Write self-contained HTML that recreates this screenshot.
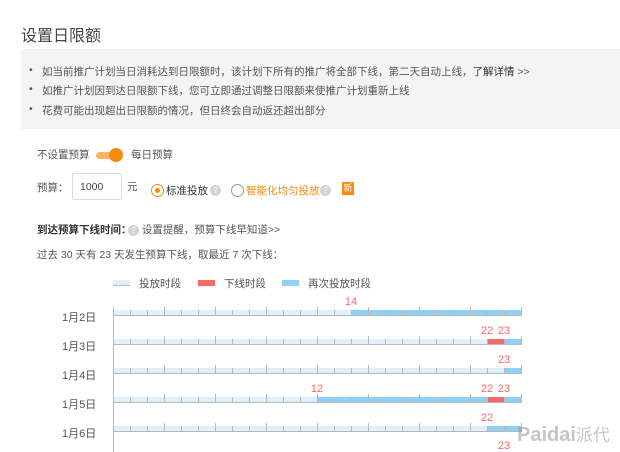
<!DOCTYPE html>
<html><head><meta charset="utf-8"><style>
*{margin:0;padding:0;box-sizing:border-box}
body{width:620px;height:452px;overflow:hidden;background:#fff;font-family:"Liberation Sans","Noto Sans CJK SC",sans-serif;color:#555;position:relative;font-size:10.5px}
.a{position:absolute;white-space:nowrap}
.box{position:absolute;left:21px;top:49px;width:599px;height:80px;background:#f4f4f4}
.q{display:inline-block;width:11px;height:11px;border-radius:50%;background:#d4d4d4;color:#fff;font-size:8px;text-align:center;line-height:11px;vertical-align:middle}
.bar{position:absolute;left:113px;width:408px;height:6px;background:#dff0fb;border-bottom:1px solid #b8b8b8}
.bar .t{position:absolute;left:0;top:0;width:100%;height:100%;background:repeating-linear-gradient(90deg,#b8b8b8 0 1px,transparent 1px 17px)}
.big{position:absolute;width:409px;height:9px;background:repeating-linear-gradient(90deg,#b8b8b8 0 1px,transparent 1px 51px)}
.seg{position:absolute;top:0;height:100%}
.b{background:#8fd0f5}.r{background:#f76a6a}
.lab{position:absolute;color:#f76a6a;font-size:11px;transform:translateX(-50%)}
.day{position:absolute;left:62px;font-size:11px;color:#555}
</style></head><body>
<div class="a" style="left:21px;top:22px;font-size:16px;color:#444">设置日限额</div>
<div class="box"></div>
<div class="a" style="left:29px;top:64px">•</div><div class="a" style="left:42px;top:64px">如当前推广计划当日消耗达到日限额时，该计划下所有的推广将全部下线，第二天自动上线，<span style="color:#333">了解详情</span> &gt;&gt;</div>
<div class="a" style="left:29px;top:83px">•</div><div class="a" style="left:42px;top:83px">如推广计划因到达日限额下线，您可立即通过调整日限额来使推广计划重新上线</div>
<div class="a" style="left:29px;top:103px">•</div><div class="a" style="left:42px;top:103px">花费可能出现超出日限额的情况，但日终会自动返还超出部分</div>

<div class="a" style="left:37px;top:147px">不设置预算</div>
<div class="a" style="left:96px;top:152px;width:26px;height:7px;border-radius:4px;background:#f9b56a"></div>
<div class="a" style="left:109px;top:148px;width:14px;height:14px;border-radius:50%;background:#f78a0f"></div>
<div class="a" style="left:131px;top:147px">每日预算</div>

<div class="a" style="left:37px;top:180px">预算：</div>
<div class="a" style="left:72px;top:173px;width:50px;height:27px;border:1px solid #ddd;border-radius:2px;padding:7px 0 0 7px;color:#444">1000</div>
<div class="a" style="left:127px;top:179px">元</div>
<div class="a" style="left:151px;top:184px;width:13px;height:13px;border:1px solid #f78a0f;border-radius:50%"></div>
<div class="a" style="left:155px;top:188px;width:5px;height:5px;background:#f78a0f;border-radius:50%"></div>
<div class="a" style="left:166px;top:183px;color:#333">标准投放</div><div class="a" style="left:210px;top:184px"><span class="q">?</span></div>
<div class="a" style="left:231px;top:184px;width:13px;height:13px;border:1px solid #999;border-radius:50%"></div>
<div class="a" style="left:246px;top:183px;color:#f78a0f">智能化均匀投放</div><div class="a" style="left:320px;top:184px"><span class="q">?</span></div>
<div class="a" style="left:342px;top:182px;width:12px;height:13px;background:#f78a0f;color:#fff;font-size:9px;text-align:center;line-height:13px">新</div>

<div class="a" style="left:37px;top:222px;color:#333;font-weight:bold">到达预算下线时间：</div>
<div class="a" style="left:128px;top:222px"><span class="q">?</span> 设置提醒，预算下线早知道&gt;&gt;</div>
<div class="a" style="left:37px;top:247px">过去 30 天有 23 天发生预算下线，取最近 7 次下线：</div>

<div class="a" style="left:113px;top:280px;width:17px;height:6px;background:#dff0fb;border-bottom:1px solid #bbb"></div>
<div class="a" style="left:139px;top:276px">投放时段</div>
<div class="a" style="left:198px;top:280px;width:17px;height:6px;background:#f76a6a"></div>
<div class="a" style="left:224px;top:276px">下线时段</div>
<div class="a" style="left:282px;top:280px;width:17px;height:6px;background:#8fd0f5"></div>
<div class="a" style="left:308px;top:276px">再次投放时段</div>

<div class="a" style="left:113px;top:307px;width:1px;height:145px;background:#b8b8b8"></div>

<div class="day" style="top:309px">1月2日</div>
<div class="bar" style="top:310px"><div class="seg b" style="left:238px;width:170px"></div><div class="t"></div></div>
<div class="a big" style="left:113px;top:307px"></div>
<div class="lab" style="left:351px;top:296px">14</div>

<div class="day" style="top:338px">1月3日</div>
<div class="bar" style="top:339px"><div class="seg r" style="left:374px;width:17px"></div><div class="seg b" style="left:391px;width:17px"></div><div class="t"></div></div>
<div class="a big" style="left:113px;top:336px"></div>
<div class="lab" style="left:487px;top:325px">22</div><div class="lab" style="left:504px;top:325px">23</div>

<div class="day" style="top:367px">1月4日</div>
<div class="bar" style="top:368px"><div class="seg b" style="left:391px;width:17px"></div><div class="t"></div></div>
<div class="a big" style="left:113px;top:365px"></div>
<div class="lab" style="left:504px;top:354px">23</div>

<div class="day" style="top:396px">1月5日</div>
<div class="bar" style="top:397px"><div class="seg b" style="left:204px;width:170px"></div><div class="seg r" style="left:374px;width:17px"></div><div class="seg b" style="left:391px;width:17px"></div><div class="t"></div></div>
<div class="a big" style="left:113px;top:394px"></div>
<div class="lab" style="left:317px;top:383px">12</div><div class="lab" style="left:487px;top:383px">22</div><div class="lab" style="left:504px;top:383px">23</div>

<div class="day" style="top:425px">1月6日</div>
<div class="bar" style="top:426px"><div class="seg b" style="left:374px;width:34px"></div><div class="t"></div></div>
<div class="a big" style="left:113px;top:423px"></div>
<div class="lab" style="left:487px;top:412px">22</div><div class="lab" style="left:504px;top:440px">23</div>

<div class="a" style="left:517px;top:421px;font-size:20px;font-weight:bold;color:rgba(150,150,150,0.55)">Paidai<span style="font-size:17px;font-weight:normal">派代</span></div>
</body></html>
